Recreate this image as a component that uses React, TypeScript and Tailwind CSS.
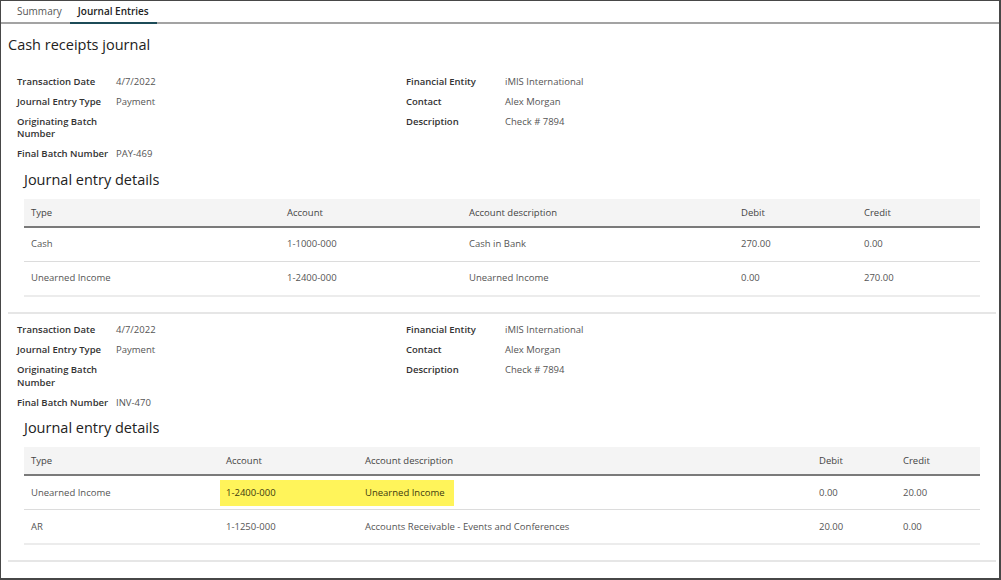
import type { ReactNode } from 'react';

type Row = { type: string; account: string; desc: string; debit: string; credit: string; mark?: boolean };

type Entry = {
  date: string;
  entryType: string;
  finalBatch: string;
  entity: string;
  contact: string;
  description: string;
  cols: string;
  rows: Row[];
};

const entries: Entry[] = [
  {
    date: '4/7/2022',
    entryType: 'Payment',
    finalBatch: 'PAY-469',
    entity: 'iMIS International',
    contact: 'Alex Morgan',
    description: 'Check # 7894',
    cols: 'grid-cols-[256px_182px_272px_123px_123px]',
    rows: [
      { type: 'Cash', account: '1-1000-000', desc: 'Cash in Bank', debit: '270.00', credit: '0.00' },
      { type: 'Unearned Income', account: '1-2400-000', desc: 'Unearned Income', debit: '0.00', credit: '270.00' },
    ],
  },
  {
    date: '4/7/2022',
    entryType: 'Payment',
    finalBatch: 'INV-470',
    entity: 'iMIS International',
    contact: 'Alex Morgan',
    description: 'Check # 7894',
    cols: 'grid-cols-[195px_139px_454px_84px_84px]',
    rows: [
      { type: 'Unearned Income', account: '1-2400-000', desc: 'Unearned Income', debit: '0.00', credit: '20.00', mark: true },
      { type: 'AR', account: '1-1250-000', desc: 'Accounts Receivable - Events and Conferences', debit: '20.00', credit: '0.00' },
    ],
  },
];

function Field({ label, children }: { label: string; children?: ReactNode }) {
  return (
    <div className="flex py-[3.75px] leading-[12.5px]">
      <div className="w-[99px] shrink-0 pr-[1px] font-semibold text-[#333]">{label}</div>
      <div className="text-[#555]">{children}</div>
    </div>
  );
}

function EntryBlock({ entry }: { entry: Entry }) {
  return (
    <>
      <div className="mt-[7px] ml-[9px] flex text-[9.5px]">
        <div className="w-[389px]">
          <Field label="Transaction Date">{entry.date}</Field>
          <Field label="Journal Entry Type">{entry.entryType}</Field>
          <Field label="Originating Batch Number" />
          <Field label="Final Batch Number">{entry.finalBatch}</Field>
        </div>
        <div>
          <Field label="Financial Entity">{entry.entity}</Field>
          <Field label="Contact">{entry.contact}</Field>
          <Field label="Description">{entry.description}</Field>
        </div>
      </div>

      <div className="mx-[16px]">
        <h2 className="mb-[4px] flex h-[30px] items-center text-[14.5px] text-[#222]">Journal entry details</h2>
        <div className="text-[9.5px]">
          <div className={`grid ${entry.cols} h-[29px] items-center border-b-2 border-[#7a7a7a] bg-[#f4f4f4] pt-[2px] text-[#444]`}>
            <div className="pl-[7px]">Type</div>
            <div className="pl-[7px]">Account</div>
            <div className="pl-[7px]">Account description</div>
            <div className="pl-[7px]">Debit</div>
            <div className="pl-[7px]">Credit</div>
          </div>
          {entry.rows.map((r, i) => (
            <div
              key={r.account + i}
              className={`grid ${entry.cols} items-center text-[#555] ${
                i === entry.rows.length - 1 ? 'h-[35px] border-b-2 border-[#ececec]' : 'h-[34px] border-b border-[#dcdcdc]'
              }`}
            >
              <div className="pl-[7px] pt-[1px]">{r.type}</div>
              <div className="relative flex h-full items-center pl-[7px] pt-[1px]">
                {r.mark && <div className="absolute left-[1px] top-[4px] h-[26px] w-[234px] bg-[#fff45a]" />}
                <span className={r.mark ? 'relative text-[#3d3a10]' : ''}>{r.account}</span>
              </div>
              <div className="pl-[7px] pt-[1px]">
                <span className={r.mark ? 'relative text-[#3d3a10]' : ''}>{r.desc}</span>
              </div>
              <div className="pl-[7px] pt-[1px]">{r.debit}</div>
              <div className="pl-[7px] pt-[1px]">{r.credit}</div>
            </div>
          ))}
        </div>
      </div>

      <div className="mt-[15px] border-t-2 border-[#e6e6e6]" />
    </>
  );
}

export default function App() {
  return (
    <div
      className="h-[580px] w-[1001px] overflow-hidden border-t border-l border-r-2 border-b-2 border-[#474747] bg-white"
      style={{ fontFamily: '"Open Sans", "Liberation Sans", sans-serif' }}
    >
      <div className="flex h-[23px] border-b-2 border-[#a3a3a3] pl-[8px] text-[10px]">
        <div className="-mb-[2px] flex h-[23px] items-center border-b-2 border-transparent px-[8px] text-[#555]">Summary</div>
        <div className="-mb-[2px] flex h-[23px] items-center border-b-2 border-[#1c4b57] px-[8px] font-semibold text-[#222]">
          Journal Entries
        </div>
      </div>

      <div className="pl-[7px] pr-[3px]">
        <h1 className="flex h-[41px] items-center text-[14.5px] text-[#222]">Cash receipts journal</h1>
        {entries.map((e, i) => (
          <EntryBlock key={i} entry={e} />
        ))}
      </div>
    </div>
  );
}
